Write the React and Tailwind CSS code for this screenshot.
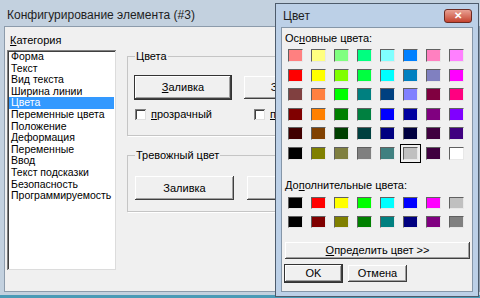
const font = { fontFamily: '"Liberation Sans", Arial, sans-serif' }

const categories = [
  'Форма',
  'Текст',
  'Вид текста',
  'Ширина линии',
  'Цвета',
  'Переменные цвета',
  'Положение',
  'Деформация',
  'Переменные',
  'Ввод',
  'Текст подсказки',
  'Безопасность',
  'Программируемость',
]

const basic = [
  '#ff8080', '#ffff80', '#80ff80', '#00ff80', '#80ffff', '#0080ff', '#ff80c0', '#ff80ff',
  '#ff0000', '#ffff00', '#80ff00', '#00ff40', '#00ffff', '#0080c0', '#8080c0', '#ff00ff',
  '#804040', '#ff8040', '#00ff00', '#008080', '#004080', '#8080ff', '#800040', '#ff0080',
  '#800000', '#ff8000', '#008000', '#008040', '#0000ff', '#0000a0', '#800080', '#8000ff',
  '#400000', '#804000', '#004000', '#004040', '#000080', '#000040', '#400040', '#400080',
  '#000000', '#808000', '#808040', '#808080', '#408080', '#c0c0c0', '#400040', '#ffffff',
]

const custom = [
  '#000000', '#ff0000', '#ffff00', '#00ff00', '#00ffff', '#0000ff', '#ff00ff', '#c0c0c0',
  '#000000', '#800000', '#808000', '#008000', '#008080', '#000080', '#800080', '#808080',
]

const raised =
  'bg-[#f0f0f0] shadow-[inset_-1px_-1px_#404040,inset_1px_1px_#ffffff,inset_-2px_-2px_#a0a0a0]'

function Button({ children, className = '' }) {
  return (
    <div className={`flex items-center justify-center text-[11px] text-black ${raised} ${className}`}>
      {children}
    </div>
  )
}

function CheckBox() {
  return (
    <div className="flex items-center gap-[5px] text-[11px] leading-[13px]">
      <div className="h-[11px] w-[11px] bg-white shadow-[inset_1px_1px_#808080,inset_-1px_-1px_#e0e0e0,inset_2px_2px_#404040]" />
      <span className="underline-offset-1">
        <u>п</u>розрачный
      </span>
    </div>
  )
}

function Swatch({ color, selected }) {
  return (
    <div className={selected ? 'm-[-3px] border border-black p-[2px]' : ''}>
      <div
        className="h-full w-full border-t border-l border-t-[#606060] border-l-[#606060] border-b border-r border-b-[#e8e8e8] border-r-[#e8e8e8]"
        style={{ backgroundColor: color }}
      />
    </div>
  )
}

export default function App() {
  return (
    <div className="relative h-[298px] w-[480px] overflow-hidden bg-[#4a9ab6] text-black" style={font}>
      {/* main window */}
      <div className="flex h-[295px] w-[480px] flex-col bg-[#c3d1df]">
        <div className="flex h-[26px] items-center pl-[7px] pt-[4px] text-[12px] text-[#1e1e1e]">
          Конфигурирование элемента (#3)
        </div>
        <div className="mb-[3px] ml-[4px] flex flex-1 border border-[#8c9bab] bg-[#f0f0f0]">
          <div className="ml-[2px] flex w-[109px] flex-col pt-[7px]">
            <div className="pl-[3px] text-[11px] leading-[13px]">
              <u>К</u>атегория
            </div>
            <div className="mt-[3px] h-[220px] bg-white pt-[1px] shadow-[inset_1px_1px_#808080,inset_-1px_-1px_#dcdcdc,inset_2px_2px_#404040]">
              {categories.map((c) => (
                <div
                  key={c}
                  className={`mx-[2px] h-[11.6px] pl-[2px] text-[10.5px] leading-[11.6px] ${
                    c === 'Цвета' ? 'bg-[#3399ff] text-white' : ''
                  }`}
                >
                  {c}
                </div>
              ))}
            </div>
          </div>

          <div className="ml-[11px] flex flex-col pt-[23px]">
            <fieldset className="w-[280px] border border-[#c5c5c5] pb-[14px] pl-[7px] shadow-[1px_1px_#ffffff]">
              <legend className="px-[1px] text-[11px] leading-[13px]">Цвета</legend>
              <div className="mt-[13px] flex gap-[13px]">
                <Button className="h-[23px] w-[96px] outline outline-1 outline-[#333]">
                  <span>
                    <u>З</u>аливка
                  </span>
                </Button>
                <Button className="h-[23px] w-[96px]">Заливка</Button>
              </div>
              <div className="mt-[9px] flex gap-[42px]">
                <CheckBox />
                <CheckBox />
              </div>
            </fieldset>

            <fieldset className="mt-[13px] w-[280px] border border-[#c5c5c5] pb-[11px] pl-[7px] shadow-[1px_1px_#ffffff]">
              <legend className="px-[1px] text-[11px] leading-[13px]">Тревожный цвет</legend>
              <div className="mt-[14px] flex gap-[13px]">
                <Button className="h-[24px] w-[99px]">Заливка</Button>
                <Button className="h-[24px] w-[99px]">Заливка</Button>
              </div>
            </fieldset>
          </div>
        </div>
      </div>

      {/* color dialog */}
      <div className="absolute left-[275px] top-[3px] flex h-[294px] w-[204px] flex-col border border-[#4d5b6b] bg-[#bcd0e7] px-[5px] pb-[4px]">
        <div className="flex h-[23px] items-center justify-between pl-[2px] pr-[1px]">
          <span className="text-[12px] text-[#1e1e1e]">Цвет</span>
          <div className="flex h-[14px] w-[28px] items-center justify-center rounded-[3px] border border-[#6b2a22] bg-gradient-to-b from-[#e8a093] to-[#c4422f] text-[10px] font-bold leading-none text-white">
            ✕
          </div>
        </div>
        <div className="flex flex-1 flex-col border border-[#8596a8] bg-[#f0f0f0] text-[11px]">
          <div className="pl-[3px] pt-[4px] leading-[13px]">
            Ос<u>н</u>овные цвета:
          </div>
          <div className="ml-[6px] mt-[4px] grid grid-cols-[repeat(8,15px)] grid-rows-[repeat(6,13px)] gap-x-[8px] gap-y-[6.5px]">
            {basic.map((c, i) => (
              <Swatch key={i} color={c} selected={i === 45} />
            ))}
          </div>
          <div className="mt-[19px] pl-[3px] leading-[13px]">
            До<u>п</u>олнительные цвета:
          </div>
          <div className="ml-[6px] mt-[5px] grid grid-cols-[repeat(8,15px)] grid-rows-[repeat(2,12px)] gap-x-[8px] gap-y-[7px]">
            {custom.map((c, i) => (
              <Swatch key={i} color={c} />
            ))}
          </div>
          <Button className="ml-[3px] mt-[14px] h-[17px] w-[185px]">
            <span>
              <u>О</u>пределить цвет &gt;&gt;
            </span>
          </Button>
          <div className="ml-[3px] mt-[6px] flex gap-[6px]">
            <Button className="h-[17px] w-[57px] outline outline-1 outline-[#333]">OK</Button>
            <Button className="h-[17px] w-[59px]">Отмена</Button>
          </div>
        </div>
      </div>
    </div>
  )
}
